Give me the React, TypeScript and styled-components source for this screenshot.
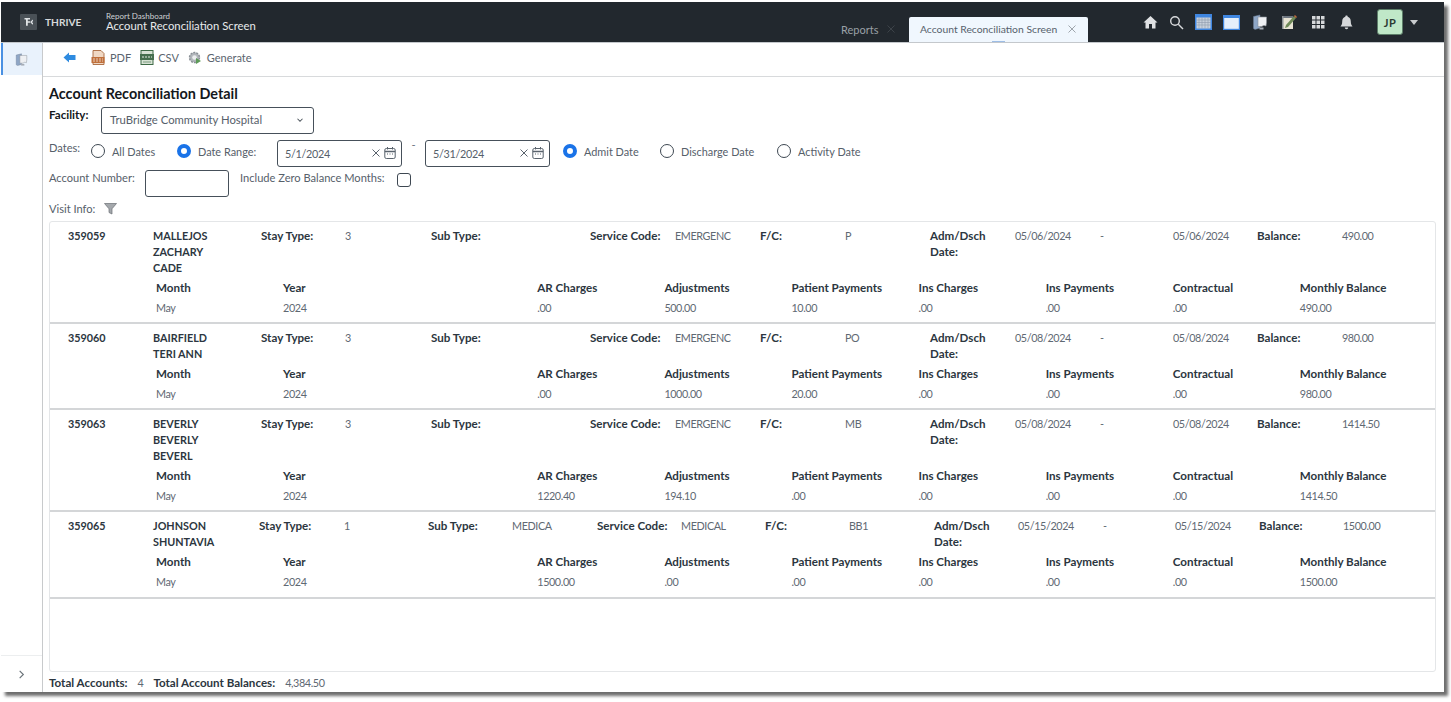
import React from "react";
import styled, { createGlobalStyle } from "styled-components";

const Global = createGlobalStyle`
  html { overflow: hidden; background: #fff; }
  html, body { margin: 0; }
  body { box-sizing: border-box; min-height: 702px; padding: 2px 0 0 1px; font-family: "Lato", "Noto Sans", sans-serif; font-size: 11.1px; color: #5f6973; }
`;

const Win = styled.div`
  width: 1443px; height: 690px; background: #fff;
  display: flex; flex-direction: column; box-shadow: 4px 4px 3px #6e6e6e; overflow: hidden;
`;
const Top = styled.header`
  height: 40px; background: #22282e; display: flex; align-items: flex-end; flex: none;
  border-bottom: 1px solid #c4c8cc; box-sizing: content-box;
`;
const Brand = styled.div`
  width: 105px; height: 40px; display: flex; align-items: center; padding-left: 19px; box-sizing: border-box; gap: 8px;
  color: #d6d8da; font-weight: 700; font-size: 10.2px;
`;
const Titles = styled.div`
  height: 40px; display: flex; flex-direction: column; justify-content: center; color: #e8eaec; width: 735px; box-sizing: border-box;
`;
const TinyTitle = styled.div`font-size: 8px; line-height: 8px; color: #cfd2d5;`;
const MainTitle = styled.div`font-size: 11.3px; line-height: 12px;`;
const TabGroup = styled.div`display: flex; align-items: flex-end; height: 40px;`;
const TabIdle = styled.div`
  width: 68px; height: 25px; padding-bottom: 1px; box-sizing: border-box; display: flex; align-items: center; color: #9aa0a6; font-size: 11px; gap: 9px;
`;
const TabActive = styled.div`
  position: relative; width: 179px; height: 25px; background: #f0f7fe; border-radius: 2px 2px 0 0; display: flex; align-items: center;
  padding: 0 0 1px 11px; box-sizing: border-box; color: #56616c; font-size: 10.35px; gap: 11px;
  &::after { content: ""; position: absolute; left: 83px; bottom: 0; width: 13px; height: 1.5px; background: #9dbde6; }
`;
const TopIcons = styled.div`
  margin-left: auto; height: 40px; display: flex; align-items: center; padding-right: 26px;
`;
const IconSlot = styled.div<{ $w: number }>`
  width: ${p => p.$w}px; display: flex; justify-content: center; align-items: center; flex: none;
`;
const Avatar = styled.div`
  width: 26px; height: 26px; box-sizing: border-box; border: 1.5px solid #5d7e69; background: #c0e8c8; border-radius: 3px; margin: 0 7px 0 18px;
  display: flex; align-items: center; justify-content: center; color: #2c3a33; font-size: 11px; font-weight: 700; letter-spacing: .5px;
`;
const Caret = styled.div`width: 0; height: 0; border-left: 4.5px solid transparent; border-right: 4.5px solid transparent; border-top: 5px solid #c9ccce;`;

const Body = styled.div`flex: 1; display: flex; min-height: 0;`;
const Side = styled.aside`
  width: 42px; box-sizing: border-box; flex: none; border-right: 1px solid #c8cacc; display: flex; flex-direction: column; justify-content: space-between;
`;
const SideActive = styled.div`
  height: 32px; background: #e9f2fc; border-left: 2px solid #4a90e2; display: flex; align-items: center; justify-content: center; padding-right: 2px;
`;
const SideFoot = styled.div`
  height: 36px; border-top: 1px solid #eceeef; display: flex; align-items: center; justify-content: center; color: #6a7278;
`;
const Main = styled.main`flex: 1; display: flex; flex-direction: column; min-width: 0;`;
const Toolbar = styled.div`
  height: 34px; flex: none; border-bottom: 1px solid #d8dadc; display: flex; align-items: center; padding: 0 0 4px 20px; box-sizing: border-box; color: #5a646e;
`;
const ToolBtn = styled.div<{ $gap?: number; $ml?: number }>`
  display: flex; align-items: center; gap: ${p => p.$gap ?? 5}px; margin-left: ${p => p.$ml ?? 0}px; font-size: 11px;
`;
const Content = styled.div`flex: 1; padding: 8px 8px 0 6px; display: flex; flex-direction: column; min-height: 0;`;
const H1 = styled.h1`margin: 0; font-size: 14.4px; line-height: 18px; font-weight: 700; color: #14181c;`;
const Bold = styled.span`font-weight: 700; font-size: 11.6px; color: #2c3640;`;
const Who = styled(Bold)`font-size: 10.8px;`;
const Val = styled.span`font-size: 10.8px; letter-spacing: -.4px;`;
const FacilityRow = styled.div`display: flex; height: 27px; align-items: flex-start; margin-top: 4px;`;
const FacilityLabel = styled(Bold)`width: 52px; line-height: 16px; color: #14181c; flex: none;`;
const Select = styled.div`
  width: 213px; height: 27px; box-sizing: border-box; border: 1px solid #46505a; border-radius: 3px; display: flex; align-items: center; justify-content: space-between;
  padding: 0 8px 2px; color: #56606a; font-size: 11.3px;
`;
const DatesRow = styled.div`display: flex; align-items: flex-start; height: 27px; margin-top: 6px;`;
const PlainLabel = styled.span<{ $w?: number }>`
  display: block; line-height: 16px; width: ${p => (p.$w ? p.$w + "px" : "auto")}; flex: none; color: #56606a;
`;
const RadioWrap = styled.label<{ $w: number; $ml?: number }>`
  width: ${p => p.$w}px; margin-left: ${p => p.$ml ?? 0}px; flex: none; display: flex; align-items: center; gap: 7px; height: 16px; margin-top: 3px; color: #56606a; font-size: 10.9px; line-height: 13px;
`;
const RadioDot = styled.span<{ $on?: boolean }>`
  width: 14px; height: 14px; border-radius: 50%; box-sizing: border-box; flex: none;
  ${p => (p.$on ? "border: 4.5px solid #1a73e8; background: #fff;" : "border: 1.2px solid #3e4852; background: #fff;")}
`;
const DateBox = styled.div`
  width: 125px; height: 27px; box-sizing: border-box; border: 1px solid #46505a; border-radius: 3px; display: flex; align-items: center; padding: 0 5px 1px 7px; color: #56606a; gap: 4px; flex: none;
`;
const DateText = styled.span`flex: 1; font-size: 10.8px; letter-spacing: -.3px;`;
const Dash = styled.span`width: 23px; text-align: center; flex: none; line-height: 10px; color: #6a7480;`;
const AcctRow = styled.div`display: flex; align-items: flex-start; height: 27px; margin-top: 3px;`;
const Input = styled.div`width: 84px; height: 27px; box-sizing: border-box; border: 1px solid #46505a; border-radius: 3px; flex: none; margin-right: 11px;`;
const Check = styled.div`width: 14px; height: 14px; box-sizing: border-box; border: 1.2px solid #3e4852; border-radius: 3px; flex: none; margin: 3px 0 0 12px;`;
const VisitRow = styled.div`display: flex; align-items: center; gap: 9px; height: 16px; margin-top: 4px;`;
const Card = styled.div`
  height: 451px; flex: none; margin-top: 4px; box-sizing: border-box; border: 1px solid #e4e6e8; border-radius: 3px;
`;
const Account = styled.div<{ $h: number }>`
  height: ${p => p.$h}px; box-sizing: border-box; border-bottom: 2px solid #d4d6d8; padding: 6px 0 0 18px;
`;
const Head = styled.div<{ $cols: string }>`
  display: grid; grid-template-columns: ${p => p.$cols}; line-height: 16px;
`;
const Sub = styled.div`
  display: grid; grid-template-columns: repeat(10, 127.1px); padding-left: 88px; margin-top: 4px; line-height: 16px; row-gap: 4px;
`;
const Footer = styled.div`display: flex; align-items: center; height: 24px; gap: 10px;`;
const Spacer = styled.span``;

const colsA = "85px 108px 84px 86px 85px 74px 85px 85px 85px 85px 85px 85px 73px 84px 85px auto";
const colsB = "85px 106px 85px 84px 84px 85px 84px 84px 84px 85px 84px 85px 72px 84px 84px auto";

type Acc = { id: string; name: string[]; stay: string; sub: string; svc: string; fc: string; d: string; bal: string; cells: string[]; h: number; cols: string };
const accounts: Acc[] = [
  { id: "359059", name: ["MALLEJOS", "ZACHARY", "CADE"], stay: "3", sub: "", svc: "EMERGENC", fc: "P", d: "05/06/2024", bal: "490.00", cells: [".00", "500.00", "10.00", ".00", ".00", ".00", "490.00"], h: 102, cols: colsA },
  { id: "359060", name: ["BAIRFIELD", "TERI ANN"], stay: "3", sub: "", svc: "EMERGENC", fc: "PO", d: "05/08/2024", bal: "980.00", cells: [".00", "1000.00", "20.00", ".00", ".00", ".00", "980.00"], h: 86, cols: colsA },
  { id: "359063", name: ["BEVERLY", "BEVERLY", "BEVERL"], stay: "3", sub: "", svc: "EMERGENC", fc: "MB", d: "05/08/2024", bal: "1414.50", cells: ["1220.40", "194.10", ".00", ".00", ".00", ".00", "1414.50"], h: 102, cols: colsA },
  { id: "359065", name: ["JOHNSON", "SHUNTAVIA"], stay: "1", sub: "MEDICA", svc: "MEDICAL", fc: "BB1", d: "05/15/2024", bal: "1500.00", cells: ["1500.00", ".00", ".00", ".00", ".00", ".00", "1500.00"], h: 87, cols: colsB },
];
const subHeads = ["Month", "Year", "", "AR Charges", "Adjustments", "Patient Payments", "Ins Charges", "Ins Payments", "Contractual", "Monthly Balance"];

const Home = () => <svg width="15" height="14" viewBox="0 0 15 14"><path d="M7.5 1 0.5 7.500h2V13.500h3.500V9h3v4.500h3.500V7.500h2z" fill="#dfe1e3" /></svg>;
const Search = () => <svg width="15" height="15" viewBox="0 0 15 15" fill="none" stroke="#d8dadc" strokeWidth="1.400"><circle cx="6" cy="6" r="4.300" /><path d="M9.300 9.300 14 14" /></svg>;
const Cal = () => <svg width="17" height="16" viewBox="0 0 17 16"><rect width="17" height="16" fill="#3f86e0" /><rect x="1.500" y="3.500" width="14" height="11" fill="#c8d0dc" /><path d="M1.500 6h14M1.500 8.500h14M1.500 11h14M4 3.500v11M7 3.500v11M10 3.500v11M13 3.500v11" stroke="#8f9bac" strokeWidth=".6" /></svg>;
const WinIcon = () => <svg width="17" height="15" viewBox="0 0 17 15"><rect width="17" height="15" fill="#3f86e0" /><rect x="1.200" y="3" width="14.600" height="10.800" fill="#e4eefa" /></svg>;
const Docs = ({ s = 16 }: { s?: number }) => <svg width={s} height={s} viewBox="0 0 16 16"><path d="M1.500 2.500 8 1v13l-5 1.500-1.500-1z" fill="#8ea6c6" stroke="#6f7f94" strokeWidth=".5" /><path d="M6 3h8.500v5.500L14 12c-2-1-3-.5-4 .5L6 12.500z" fill="#eef0f3" stroke="#8b9198" strokeWidth=".6" /><path d="M7.500 13.500h4v2h-4z" fill="#a6adb6" /></svg>;
const Note = () => <svg width="16" height="16" viewBox="0 0 16 16"><rect x="1" y="2" width="11" height="13" fill="#e8e4d4" /><path d="M1 2h11v2H1z" fill="#6e7680" /><path d="M1 2h1.500v13H1z" fill="#8a8f94" /><path d="M5 11 13 2l2 2-8 9-3 1z" fill="#6f8a58" /><path d="M13 2l1-1 2 2-1 1z" fill="#c46a3c" /></svg>;
const Grid9 = () => <svg width="13" height="13" viewBox="0 0 13 13" fill="#d6d8da">{[0, 4.500, 9].flatMap(y => [0, 4.500, 9].map(x => <rect key={`${x}-${y}`} x={x} y={y} width="3.500" height="3.500" />))}</svg>;
const Bell = () => <svg width="13" height="15" viewBox="0 0 13 15" fill="#d6d8da"><path d="M6.500 0.500c.8 0 1.200.5 1.200 1.200C9.800 2.300 10.800 4 10.800 6.500c0 2.500.7 3.900 1.700 5H.5c1-1.100 1.700-2.500 1.700-5 0-2.500 1-4.200 3.100-4.800 0-.7.4-1.200 1.200-1.200z" /><path d="M4.800 12.500h3.400c0 1-.7 1.700-1.700 1.700s-1.700-.7-1.700-1.700z" /></svg>;
const Logo = () => <svg width="17" height="16" viewBox="0 0 17 16"><rect width="17" height="16" rx="1" fill="#4a5157" /><path d="M4.500 4h5.500v1.500H7.800V7.300H10v1.400H7.800v3H6V5.500H4.500zM10.500 7.500l2.500-2v1.800L11.800 8 13 9v1.800l-2.500-2.100z" fill="#dfe3e5" /></svg>;
const X = ({ c, s = 8 }: { c: string; s?: number }) => <svg width={s} height={s} viewBox="0 0 8 8" stroke={c} strokeWidth="1" fill="none"><path d="M.5.5l7 7M7.500.5l-7 7" /></svg>;
const BackArrow = () => <svg width="13" height="11" viewBox="0 0 13 11"><path d="M0.500 5.500 6 .5v2.500h6.500v5H6v2.500z" fill="#2e8be0" /></svg>;
const Pdf = () => <svg width="14" height="15" viewBox="0 0 14 15"><path d="M2 .5h8l3 3v11H2z" fill="#f0d8c4" stroke="#a8683c" strokeWidth=".9" /><rect x="0.500" y="7" width="13" height="6" fill="#c0703c" /><path d="M2 9h10M2 11h10" stroke="#f4e6da" strokeWidth=".8" strokeDasharray="2 1" /></svg>;
const Csv = () => <svg width="14" height="15" viewBox="0 0 14 15"><rect x="1" y=".5" width="12" height="14" fill="#d7e2d4" stroke="#3e6a46" /><rect x="0" y="4" width="14" height="6" fill="#466f4e" /><path d="M2 7h10" stroke="#e4efe4" strokeDasharray="2 1" /><path d="M3 12h8" stroke="#7c9c80" /></svg>;
const Gear = () => <svg width="14" height="14" viewBox="0 0 14 14"><circle cx="6.500" cy="6.500" r="5" fill="#b0b5ba" stroke="#8a9096" strokeWidth="1.400" strokeDasharray="2 1.100" /><circle cx="6.500" cy="6.500" r="2.300" fill="#eceeef" /><path d="M8 7l5 3-5 3z" fill="#5d9a58" /></svg>;
const Chev = () => <svg width="10" height="10" viewBox="0 0 24 24" fill="none" stroke="#4e565e" strokeWidth="2.500"><path d="M6 9l6 6 6-6" /></svg>;
const CalSmall = () => <svg width="12" height="12" viewBox="0 0 12 12" fill="none" stroke="#59636d" strokeWidth="1"><rect x=".8" y="1.500" width="10.400" height="10" rx="1.500" /><path d="M.8 4.500h10.400" strokeWidth="1.500" /><path d="M3.500 0v2.500M8.500 0v2.500" /><path d="M3 7h1M5.500 7h1M8 7h1" /></svg>;
const Funnel = () => <svg width="13" height="12" viewBox="0 0 13 12"><path d="M.5.500h12L8 5.800V11L5 9.500V5.800z" fill="#a4a8ac" stroke="#6a6f74" strokeWidth=".7" /></svg>;
const ChevRight = () => <svg width="11" height="11" viewBox="0 0 24 24" fill="none" stroke="currentColor" strokeWidth="2.500"><path d="M8 4l8 8-8 8" /></svg>;

function DateField({ v }: { v: string }) {
  return <DateBox><DateText>{v}</DateText><X c="#59636d" /><CalSmall /></DateBox>;
}

function AccountRow({ a }: { a: Acc }) {
  return (
    <Account $h={a.h}>
      <Head $cols={a.cols}>
        <Who>{a.id}</Who>
        <Who>{a.name.map(n => <div key={n + a.id}>{n}</div>)}</Who>
        <Bold>Stay Type:</Bold>
        <Val>{a.stay}</Val>
        <Bold>Sub Type:</Bold>
        <Val>{a.sub}</Val>
        <Bold>Service Code:</Bold>
        <Val>{a.svc}</Val>
        <Bold>F/C:</Bold>
        <Val>{a.fc}</Val>
        <Bold>Adm/Dsch<br />Date:</Bold>
        <Val>{a.d}</Val>
        <Val>-</Val>
        <Val>{a.d}</Val>
        <Bold>Balance:</Bold>
        <Val>{a.bal}</Val>
      </Head>
      <Sub>
        {subHeads.map((h, i) => <Bold key={i}>{h}</Bold>)}
        <Val>May</Val>
        <Val>2024</Val>
        <Spacer />
        {a.cells.map((c, i) => <Val key={i}>{c}</Val>)}
      </Sub>
    </Account>
  );
}

export default function App() {
  return (
    <>
      <Global />
      <Win>
        <Top>
          <Brand><Logo />THRIVE</Brand>
          <Titles>
            <TinyTitle>Report Dashboard</TinyTitle>
            <MainTitle>Account Reconciliation Screen</MainTitle>
          </Titles>
          <TabGroup>
            <TabIdle>Reports<X c="#3c4248" /></TabIdle>
            <TabActive>Account Reconciliation Screen<X c="#9ea5ac" /></TabActive>
          </TabGroup>
          <TopIcons>
            <IconSlot $w={26}><Home /></IconSlot>
            <IconSlot $w={26}><Search /></IconSlot>
            <IconSlot $w={28}><Cal /></IconSlot>
            <IconSlot $w={29}><WinIcon /></IconSlot>
            <IconSlot $w={28}><Docs /></IconSlot>
            <IconSlot $w={29}><Note /></IconSlot>
            <IconSlot $w={30}><Grid9 /></IconSlot>
            <IconSlot $w={26}><Bell /></IconSlot>
            <Avatar>JP</Avatar>
            <Caret />
          </TopIcons>
        </Top>
        <Body>
          <Side>
            <SideActive><Docs s={13} /></SideActive>
            <SideFoot><ChevRight /></SideFoot>
          </Side>
          <Main>
            <Toolbar>
              <BackArrow />
              <ToolBtn $ml={15}><Pdf />PDF</ToolBtn>
              <ToolBtn $ml={9} $gap={4}><Csv />CSV</ToolBtn>
              <ToolBtn $ml={9}><Gear />Generate</ToolBtn>
            </Toolbar>
            <Content>
              <H1>Account Reconciliation Detail</H1>
              <FacilityRow>
                <FacilityLabel>Facility:</FacilityLabel>
                <Select>TruBridge Community Hospital<Chev /></Select>
              </FacilityRow>
              <DatesRow>
                <PlainLabel $w={42}>Dates:</PlainLabel>
                <RadioWrap $w={86}><RadioDot />All Dates</RadioWrap>
                <RadioWrap $w={100}><RadioDot $on />Date Range:</RadioWrap>
                <DateField v="5/1/2024" />
                <Dash>-</Dash>
                <DateField v="5/31/2024" />
                <RadioWrap $w={97} $ml={13}><RadioDot $on />Admit Date</RadioWrap>
                <RadioWrap $w={117}><RadioDot />Discharge Date</RadioWrap>
                <RadioWrap $w={110}><RadioDot />Activity Date</RadioWrap>
              </DatesRow>
              <AcctRow>
                <PlainLabel $w={96}>Account Number:</PlainLabel>
                <Input />
                <PlainLabel>Include Zero Balance Months:</PlainLabel>
                <Check />
              </AcctRow>
              <VisitRow><PlainLabel>Visit Info:</PlainLabel><Funnel /></VisitRow>
              <Card>
                {accounts.map(a => <AccountRow key={a.id} a={a} />)}
              </Card>
              <Footer>
                <Bold>Total Accounts:</Bold><Val>4</Val>
                <Bold>Total Account Balances:</Bold><Val>4,384.50</Val>
              </Footer>
            </Content>
          </Main>
        </Body>
      </Win>
    </>
  );
}
